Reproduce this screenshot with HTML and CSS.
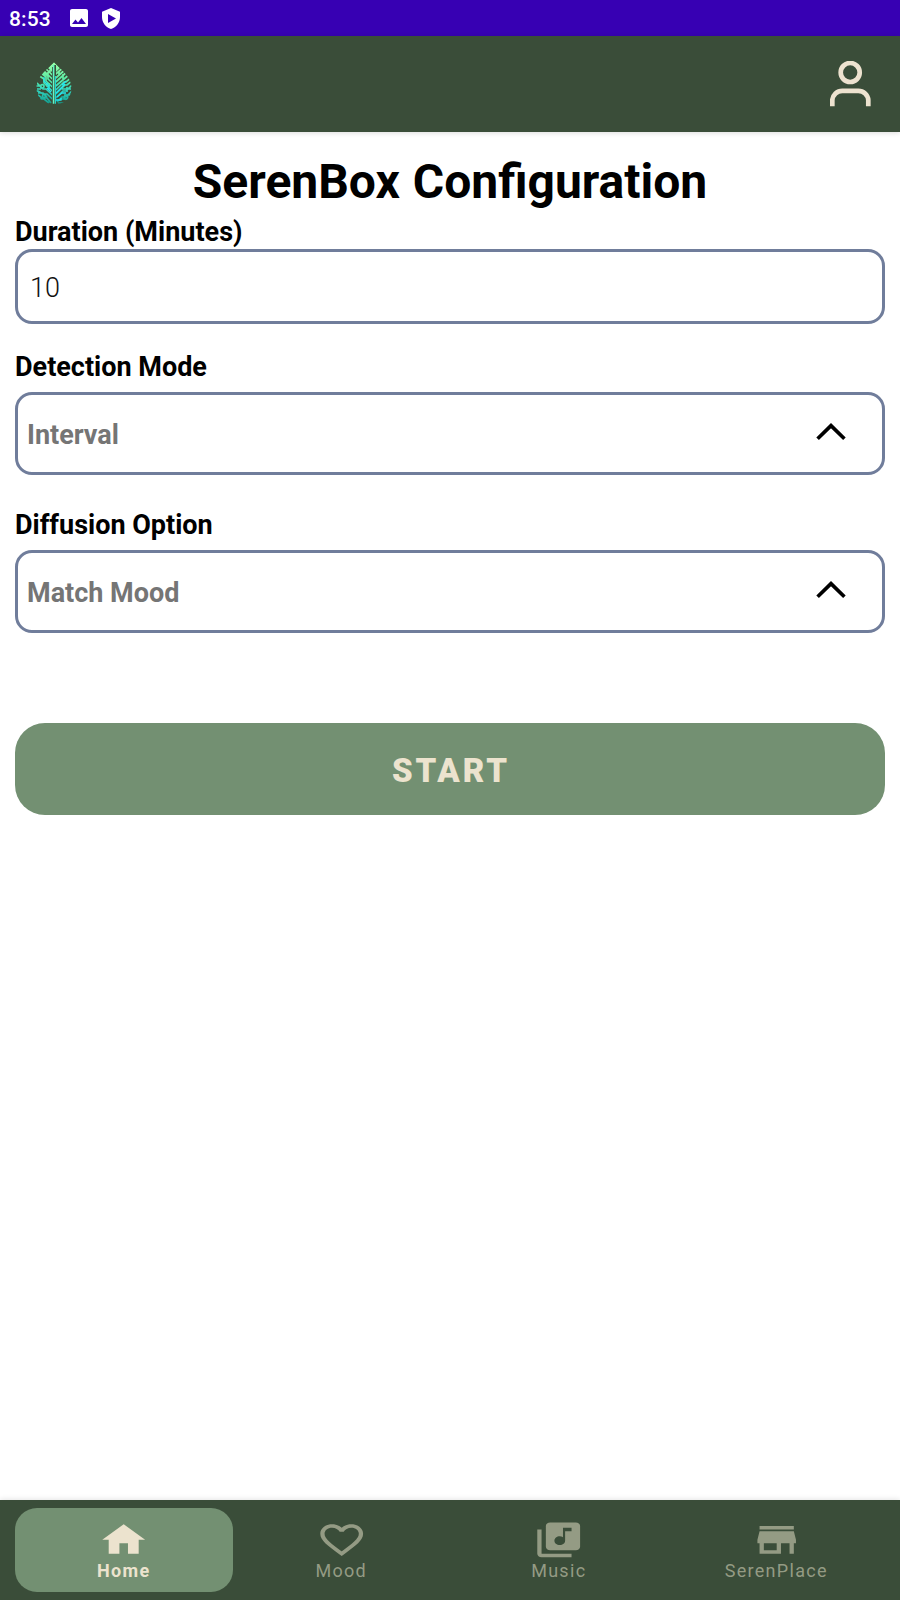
FILE: index.html
```html
<!DOCTYPE html>
<html lang="en">
<head>
<meta charset="utf-8">
<title>SerenBox Configuration</title>
<link rel="stylesheet" href="styles.css">
</head>
<body>
<div class="screen">
  <div class="status">
    <span class="clock">8:53</span>
    <svg class="status-image" width="18" height="18" viewBox="3 3 18 18"><path fill="#fff" d="M21 19V5c0-1.100-.9-2-2-2H5c-1.100 0-2 .9-2 2v14c0 1.100.9 2 2 2h14c1.100 0 2-.9 2-2zM8.500 13.500l2.500 3.010L14.500 12l4.500 6H5l3.500-4.500z"/></svg>
    <svg class="status-shield" width="18" height="21" viewBox="0 0 18 21"><path fill="#fff" fill-rule="evenodd" d="M9 0L0 3.700V9c0 5.600 3.700 10.300 9 12 5.300-1.700 9-6.400 9-12V3.700zM6 6l8 4.500L6 15z"/></svg>
  </div>
  <header class="appbar">
    <svg class="logo" width="36" height="42" viewBox="0 0 36 42">
      <defs>
        <linearGradient id="leaf" x1="0" y1="0" x2="0" y2="42" gradientUnits="userSpaceOnUse">
          <stop offset="0" stop-color="#9bffa5"/><stop offset=".4" stop-color="#5ceba5"/><stop offset=".68" stop-color="#30d5c0"/><stop offset="1" stop-color="#109a8c"/>
        </linearGradient>
        <clipPath id="outline"><path d="M18 0C23 6 35.500 14 35.500 26c0 9-6 15.500-14 15.800h-7C6.500 41.500.5 35 .5 26 .5 14 13 6 18 0z"/></clipPath>
      </defs>
      <g clip-path="url(#outline)" fill="none" stroke="url(#leaf)" stroke-width="1.700">
        <path d="M12 6l6-6 6 6-4 4V3h-3v8z" fill="url(#leaf)" stroke="none"/>
        <path d="M16.300 13L9 6M16.300 17L6 7M16.300 21L12 17v-3L5 9M16.300 25L10 19v-4l-6-5M16.300 29L8 21v-4l-6-4M16.300 33L10 27H7l-7-7M16.300 37L11 32H7l-5-3H0M15 41l-4-5H6l-4-3M0 24h4l2 2M1 27h4M4 37h4l5 4M2 31h5l4 4M12 10v4M14 8v4"/>
        <path d="M19.800 12L28 5M19.800 16L31 6M19.800 20L33 8M19.800 24L35 11M19.800 28L28 20h2l6-5M19.800 32L29 23h2l5-4M19.800 36L27 29h3l6-6M21 40l5-5h4l6-6M26 27h9M24 37h9M22 41h8M28 33h7M31 25v5M23 9v4M27 12v5"/>
        <circle cx="6.300" cy="24.300" r="1.700"/><circle cx="12" cy="23" r="1.400"/><circle cx="30" cy="35.500" r="1.800"/><circle cx="8" cy="34" r="1.500"/>
        <path stroke="#25e6ef" stroke-width="1.300" d="M8 15v4l5 5v4M11 26l4 4M20 31l9-9M26 23l4-4M21 35l5-4h4M20 38h5v-2"/>
        <path stroke="#3a4d39" stroke-width="4" d="M18 5v37"/>
        <path stroke="#63f5c4" stroke-width="1.600" d="M17.600 3v39"/><path stroke="#1cd6d4" stroke-width="1" d="M19.500 14v28"/>
      </g>
    </svg>
    <svg class="person" width="42" height="46" viewBox="0 0 42 46" fill="none" stroke="#ede2cf" stroke-width="4.700"><circle cx="20.200" cy="11.500" r="9.500"/><path d="M2.300 45.200V39a10 10 0 0 1 10-9.200h16a10 10 0 0 1 10 9.200v6.200"/></svg>
  </header>
  <main class="content">
    <h1 class="title">SerenBox Configuration</h1>
    <div class="label label-duration">Duration (Minutes)</div>
    <div class="box input">10</div>
    <div class="label label-detection">Detection Mode</div>
    <div class="box select"><span>Interval</span><svg width="30" height="18" viewBox="0 0 30 18" fill="none" stroke="#000" stroke-width="3.700"><path d="M1.600 15.700L15 2.600l13.400 13.100"/></svg></div>
    <div class="label label-diffusion">Diffusion Option</div>
    <div class="box select"><span>Match Mood</span><svg width="30" height="18" viewBox="0 0 30 18" fill="none" stroke="#000" stroke-width="3.700"><path d="M1.600 15.700L15 2.600l13.400 13.100"/></svg></div>
    <div class="start">START</div>
  </main>
  <nav class="tabs">
    <div class="tab active"><svg class="icon" viewBox="0 0 24 24" preserveAspectRatio="none"><path d="M10 20v-6h4v6h5v-8h3L12 3 2 12h3v8z"/></svg><span>Home</span></div>
    <div class="tab"><svg class="icon" viewBox="0 0 24 24" preserveAspectRatio="none"><path d="M16.500 3c-1.740 0-3.410.81-4.500 2.090C10.910 3.810 9.240 3 7.500 3 4.420 3 2 5.420 2 8.500c0 3.780 3.400 6.860 8.550 11.540L12 21.350l1.450-1.320C18.600 15.360 22 12.280 22 8.500 22 5.420 19.580 3 16.500 3zm-4.400 15.550l-.1.100-.1-.1C7.140 14.240 4 11.390 4 8.500 4 6.500 5.500 5 7.500 5c1.540 0 3.040.99 3.570 2.360h1.870C13.460 5.990 14.960 5 16.500 5c2 0 3.500 1.500 3.500 3.500 0 2.890-3.140 5.740-7.900 10.050z"/></svg><span>Mood</span></div>
    <div class="tab"><svg class="icon" viewBox="0 0 24 24" preserveAspectRatio="none"><path d="M20 2H8c-1.100 0-2 .9-2 2v12c0 1.100.9 2 2 2h12c1.100 0 2-.9 2-2V4c0-1.100-.9-2-2-2zm-2 5h-3v5.500c0 1.380-1.120 2.500-2.500 2.500S10 13.880 10 12.500s1.120-2.500 2.500-2.500c.57 0 1.080.19 1.500.51V5h4v2zM4 6H2v14c0 1.100.9 2 2 2h14v-2H4V6z"/></svg><span>Music</span></div>
    <div class="tab"><svg class="icon" viewBox="0 0 24 24" preserveAspectRatio="none"><path d="M20 4H4v2h16V4zm1 10v-2l-1-5H4l-1 5v2h1v6h10v-6h4v6h2v-6h1zm-9 4H6v-4h6v4z"/></svg><span>SerenPlace</span></div>
  </nav>
</div>
</body>
</html>
```
FILE: styles.css
```css
* { box-sizing: border-box; }
body { margin: 0; font-family: Roboto, sans-serif; background: #fff; }
svg { display: block; flex: none; }
.screen { display: flex; flex-direction: column; width: 900px; height: 1600px; overflow: hidden; }
.status { display: flex; align-items: center; height: 36px; padding-left: 9px; background: #3700b3; color: #fff; }
.clock { width: 60.500px; font-size: 21px; font-weight: 500; line-height: 36px; padding-top: 1px; letter-spacing: .1px; }
.status-shield { margin-left: 14px; }
.appbar { display: flex; justify-content: space-between; height: 96px; padding: 25px 28px 0 36px; background: #3a4d39; box-shadow: 0 1px 5px rgba(0, 0, 0, .14); }
.logo { margin-top: 1px; }
.content { display: flex; flex-direction: column; flex: 1; padding: 21px 15px 0; }
.title { margin: 0; height: 62px; font-size: 48px; line-height: 57px; font-weight: 700; text-align: center; word-spacing: 1px; }
.label { font-size: 27px; line-height: 32px; font-weight: 700; color: #000; }
.label-duration { height: 34px; padding-top: 1px; }
.label-detection { margin-top: 27px; height: 41px; }
.label-diffusion { margin-top: 34px; height: 41px; }
.box { display: flex; align-items: center; border: 3px solid #707d9b; border-radius: 17px; font-size: 27px; line-height: 32px; }
.input { height: 75px; padding: 3px 12px 0; font-weight: 300; color: #111; }
.select { justify-content: space-between; height: 83px; padding: 2px 36.500px 0 9px; font-weight: 700; color: #757575; }
.select svg { margin-bottom: 5px; }
.start { display: flex; align-items: center; justify-content: center; height: 92px; margin-top: 90px; padding: 3px 0 0 2px; border-radius: 30px; background: #739072; color: #ece3ce; font-size: 33px; font-weight: 900; letter-spacing: 2.900px; }
.tabs { display: flex; height: 100px; padding: 8px 15px; background: #3a4d39; box-shadow: 0 -1px 5px rgba(0, 0, 0, .1); }
.tab { display: flex; flex: 1; flex-direction: column; align-items: center; padding-top: 11px; color: #949b84; font-size: 18px; line-height: 22px; letter-spacing: 1.300px; }
.active { border-radius: 22px; background: #739072; color: #ece3ce; font-weight: 700; }
.icon { width: 51.400px; height: 41.600px; fill: currentColor; }
.tab span { margin-top: -.5px; }
```
